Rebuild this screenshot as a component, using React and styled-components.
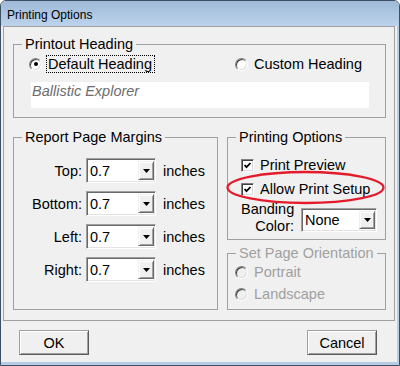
import React from 'react';
import styled, { createGlobalStyle } from 'styled-components';

const Global = createGlobalStyle`
  body {
    margin: 0;
    background: #fff;
    font-family: "Liberation Sans", Arial, sans-serif;
  }
`;

const Window = styled.div`
  position: relative;
  width: 400px;
  height: 366px;
  box-sizing: border-box;
  border: 1px solid #3d4f63;
  border-radius: 6px 6px 0 0;
  background: #f0f0f0;
  display: flex;
  flex-direction: column;
  overflow: hidden;
`;
const TitleBar = styled.div`
  flex: none;
  height: 25px;
  box-sizing: border-box;
  padding: 3px 0 0 6px;
  line-height: 22px;
  font-size: 12px;
  color: #000;
  background: linear-gradient(#9fb9d7, #bcd3ec);
`;
const Frame = styled.div`
  flex: 1;
  display: flex;
  flex-direction: column;
  padding: 0 2px;
  border-right: 2px solid #b7cde6;
  border-bottom: 3px solid #b7cde6;
`;
const Panel = styled.div`
  flex: none;
  height: 295px;
  box-sizing: border-box;
  border: 1px solid #a0a0a0;
  padding: 9px 8px 0 9px;
  font-size: 14.5px;
  line-height: 16px;
`;
const Group = styled.fieldset`
  margin: 0;
  padding: 0 0 ${p => p.$pb || 0}px ${p => p.$pl || 0}px;
  border: 1px solid #a0a0a0;
  min-width: 0;
  display: flex;
  flex-direction: column;
  ${p => p.$grow && 'flex: 1;'}
`;
const Legend = styled.legend`
  margin-left: 8px;
  padding: 0 3px;
  line-height: 16px;
  font-size: 14.5px;
  color: ${p => (p.$disabled ? '#a0a0a0' : '#000')};
`;
const OptionsRow = styled.div`
  display: grid;
  grid-template-columns: 206px 1fr;
  padding-left: 15px;
  margin-top: 2px;
  height: 20px;
  align-items: center;
`;
const Option = styled.div`
  display: flex;
  align-items: center;
  height: 20px;
  margin-top: ${p => p.$mt || 0}px;
  color: ${p => (p.$disabled ? '#a0a0a0' : '#000')};
`;
const OptionText = styled.span`
  margin-left: 4px;
  padding: 0 2px 0 1px;
  border: 1px dotted ${p => (p.$focused ? '#000' : 'transparent')};
  white-space: nowrap;
`;
const RadioDot = styled.span`
  flex: none;
  width: 13px;
  height: 13px;
  box-sizing: border-box;
  border-radius: 50%;
  border: 1px solid;
  border-color: #808080 #fff #fff #808080;
  box-shadow: inset 1px 1px 0 #404040, inset -1px -1px 0 #dcdcdc;
  background: ${p => (p.$disabled ? '#f0f0f0' : '#fff')};
  display: flex;
  align-items: center;
  justify-content: center;
  &::after {
    content: '';
    width: 4px;
    height: 4px;
    border-radius: 50%;
    background: ${p => (p.$checked ? '#000' : 'transparent')};
  }
`;
const CheckBox = styled.span`
  flex: none;
  width: 13px;
  height: 13px;
  box-sizing: border-box;
  border: 1px solid;
  border-color: #808080 #fff #fff #808080;
  box-shadow: inset 1px 1px 0 #404040, inset -1px -1px 0 #dcdcdc;
  background: #fff;
  display: flex;
  align-items: center;
  justify-content: center;
`;
const Field = styled.div`
  margin: 8px 0 0 17px;
  width: 338px;
  height: 26px;
  box-sizing: border-box;
  padding: 1px 0 0 1px;
  background: #fff;
  color: #6d6d6d;
  font-style: italic;
`;
const Row = styled.div`
  display: flex;
  gap: 9px;
  margin-top: 11px;
`;
const Column = styled.div`
  width: 159px;
  flex: none;
  display: flex;
  flex-direction: column;
  gap: 5px;
`;
const MarginList = styled.div`
  display: flex;
  flex-direction: column;
  gap: 8px;
  margin-top: 13px;
`;
const MarginRow = styled.div`
  display: grid;
  grid-template-columns: 68px 70px auto;
  column-gap: 4px;
  align-items: center;
`;
const Label = styled.span`
  text-align: right;
  white-space: nowrap;
`;
const Unit = styled.span`
  margin-left: 3px;
`;
const Combo = styled.div`
  width: ${p => p.$w}px;
  height: ${p => p.$h || 25}px;
  margin-top: ${p => p.$mt || 0}px;
  box-sizing: border-box;
  border: 1px solid;
  border-color: #a0a0a0 #fff #fff #a0a0a0;
  box-shadow: inset 1px 1px 0 #696969, inset -1px -1px 0 #e3e3e3;
  background: #fff;
  display: flex;
  align-items: center;
  padding: 2px 1px 2px 2px;
  flex: none;
`;
const ComboValue = styled.span`
  flex: 1;
  padding-left: 1px;
`;
const DropButton = styled.span`
  width: 16px;
  align-self: stretch;
  box-sizing: border-box;
  background: #f0f0f0;
  border: 1px solid;
  border-color: #f0f0f0 #696969 #696969 #f0f0f0;
  box-shadow: inset 1px 1px 0 #fff, inset -1px -1px 0 #a0a0a0;
  display: flex;
  align-items: center;
  justify-content: center;
`;
const CheckList = styled.div`
  display: flex;
  flex-direction: column;
  gap: 4px;
  margin-top: 10px;
  padding-left: 13px;
`;
const Banding = styled.div`
  display: flex;
  align-items: flex-start;
  margin-top: 2px;
  padding-left: 13px;
`;
const BandLabel = styled.span`
  width: 53px;
  text-align: right;
  line-height: 17px;
  margin-right: 7px;
`;
const RadioList = styled.div`
  display: flex;
  flex-direction: column;
  gap: 2px;
  margin-top: 1px;
  padding-left: 7px;
`;
const ButtonBar = styled.div`
  flex: 1;
  display: flex;
  justify-content: space-between;
  align-items: flex-start;
  padding: 9px 18px 0 16px;
`;
const Button = styled.button`
  width: 70px;
  height: 25px;
  box-sizing: border-box;
  padding: 0;
  font-family: "Liberation Sans", Arial, sans-serif;
  font-size: 14.5px;
  color: #000;
  background: #f0f0f0;
  border: 1px solid;
  border-color: #a0a0a0 #5a5a5a #5a5a5a #a0a0a0;
  box-shadow: inset 1px 1px 0 #fff, inset -1px -1px 0 #a0a0a0;
`;
const Annotation = styled.svg`
  position: absolute;
  left: 224px;
  top: 169px;
  pointer-events: none;
`;

const Arrow = () => (
  <svg width="7" height="4" viewBox="0 0 7 4">
    <path d="M0 0h7L3.5 4z" fill="#000" />
  </svg>
);

const Check = () => (
  <svg width="9" height="9" viewBox="0 0 9 9">
    <polyline points="1.5,4 3.5,6.2 7.5,2" fill="none" stroke="#000" strokeWidth="1.8" />
  </svg>
);

function Dropdown({ value, w, h, mt }) {
  return (
    <Combo $w={w} $h={h} $mt={mt}>
      <ComboValue>{value}</ComboValue>
      <DropButton><Arrow /></DropButton>
    </Combo>
  );
}

const margins = ['Top:', 'Bottom:', 'Left:', 'Right:'];

export default function App() {
  return (
    <>
      <Global />
      <Window>
        <TitleBar>Printing Options</TitleBar>
        <Frame>
          <Panel>
            <Group $pb={9}>
              <Legend>Printout Heading</Legend>
              <OptionsRow>
                <Option>
                  <RadioDot $checked />
                  <OptionText $focused>Default Heading</OptionText>
                </Option>
                <Option>
                  <RadioDot />
                  <OptionText>Custom Heading</OptionText>
                </Option>
              </OptionsRow>
              <Field>Ballistic Explorer</Field>
            </Group>
            <Row>
              <Group $grow>
                <Legend>Report Page Margins</Legend>
                <MarginList>
                  {margins.map(m => (
                    <MarginRow key={m}>
                      <Label>{m}</Label>
                      <Dropdown value="0.7" w={70} />
                      <Unit>inches</Unit>
                    </MarginRow>
                  ))}
                </MarginList>
              </Group>
              <Column>
                <Group $pb={4}>
                  <Legend>Printing Options</Legend>
                  <CheckList>
                    <Option>
                      <CheckBox><Check /></CheckBox>
                      <OptionText>Print Preview</OptionText>
                    </Option>
                    <Option>
                      <CheckBox><Check /></CheckBox>
                      <OptionText>Allow Print Setup</OptionText>
                    </Option>
                  </CheckList>
                  <Banding>
                    <BandLabel>Banding<br />Color:</BandLabel>
                    <Dropdown value="None" w={76} h={24} mt={7} />
                  </Banding>
                </Group>
                <Group $pb={5} $grow>
                  <Legend $disabled>Set Page Orientation</Legend>
                  <RadioList>
                    <Option $disabled>
                      <RadioDot $disabled />
                      <OptionText>Portrait</OptionText>
                    </Option>
                    <Option $disabled>
                      <RadioDot $disabled />
                      <OptionText>Landscape</OptionText>
                    </Option>
                  </RadioList>
                </Group>
              </Column>
            </Row>
          </Panel>
          <ButtonBar>
            <Button>OK</Button>
            <Button>Cancel</Button>
          </ButtonBar>
        </Frame>
        <Annotation width="164" height="38" viewBox="0 0 164 38">
          <ellipse cx="80.5" cy="17.5" rx="78" ry="15.5" fill="none" stroke="#e31b2b" strokeWidth="2.3" />
        </Annotation>
      </Window>
    </>
  );
}
